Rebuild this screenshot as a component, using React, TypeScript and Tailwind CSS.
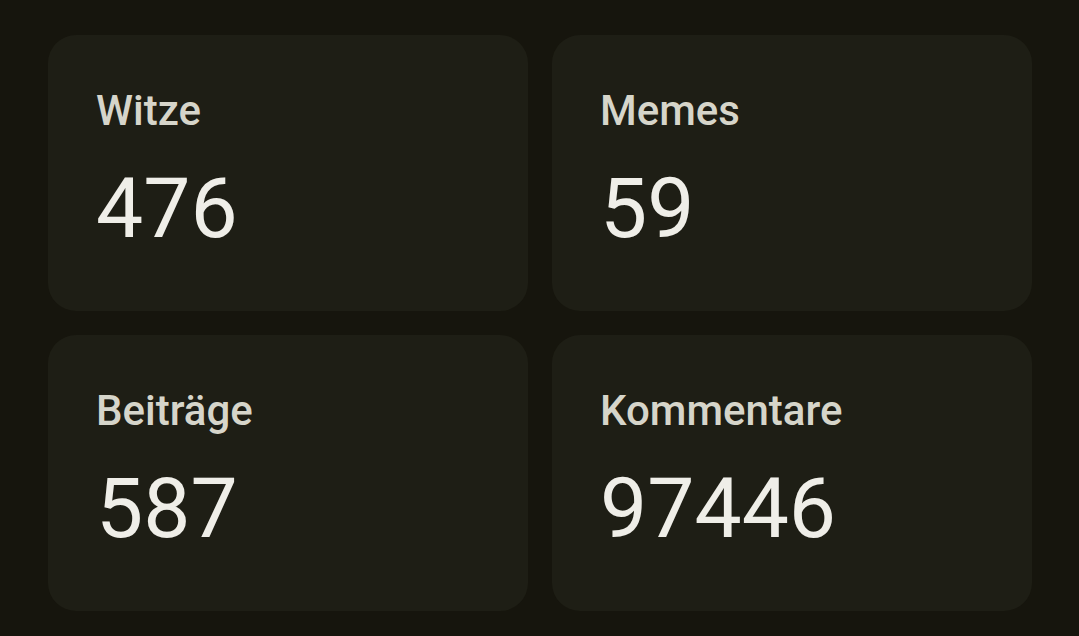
import React from "react";

const stats = [
  { label: "Witze", value: 476 },
  { label: "Memes", value: 59 },
  { label: "Beiträge", value: 587 },
  { label: "Kommentare", value: 97446 },
];

export default function App() {
  return (
    <div className="min-h-screen bg-[#16150d] pl-[48px] pr-[47px] pt-[35px] pb-[25px] font-['Roboto',sans-serif]">
      <div className="grid grid-cols-2 gap-[24px]">
        {stats.map((s) => (
          <div
            key={s.label}
            className="flex h-[276px] flex-col rounded-[28px] bg-[#1e1e15] px-[48px] pt-[52px]"
          >
            <div className="text-[42px] leading-[48px] font-medium text-[#d6d5ca]">
              {s.label}
            </div>
            <div className="mt-[26px] text-[84px] leading-[96px] font-normal text-[#efeee8]">
              {s.value}
            </div>
          </div>
        ))}
      </div>
    </div>
  );
}
